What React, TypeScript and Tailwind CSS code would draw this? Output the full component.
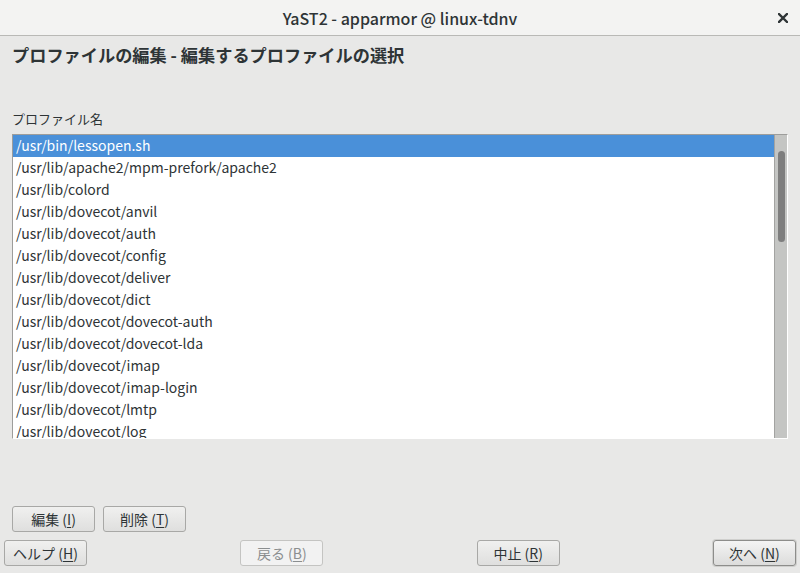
import React from 'react';

const profiles = [
    '/usr/bin/lessopen.sh',
    '/usr/lib/apache2/mpm-prefork/apache2',
    '/usr/lib/colord',
    '/usr/lib/dovecot/anvil',
    '/usr/lib/dovecot/auth',
    '/usr/lib/dovecot/config',
    '/usr/lib/dovecot/deliver',
    '/usr/lib/dovecot/dict',
    '/usr/lib/dovecot/dovecot-auth',
    '/usr/lib/dovecot/dovecot-lda',
    '/usr/lib/dovecot/imap',
    '/usr/lib/dovecot/imap-login',
    '/usr/lib/dovecot/lmtp',
    '/usr/lib/dovecot/log',
];

const JP = { fontFamily: '"Noto Sans CJK JP", "Noto Sans", sans-serif' };

interface BtnProps {
    label: string;
    mnemonic: string;
    disabled?: boolean;
    isDefault?: boolean;
}

const Btn = ({ label, mnemonic, disabled, isDefault }: BtnProps) => (
    <button
        type="button"
        disabled={disabled}
        className={`w-[83px] h-[26px] rounded-[3px] border text-[14px] leading-none flex items-center justify-center ${
            disabled
                ? 'border-[#c4c4c2] bg-[#f2f2f2] text-[#8b8e8f]'
                : isDefault
                    ? 'border-[#8d8d8b] bg-gradient-to-b from-[#f4f4f4] to-[#dcdcdb] text-[#2e3436] shadow-[0_0_0_1px_#cfcfcd]'
                    : 'border-[#a8a8a6] bg-gradient-to-b from-[#f0f0ef] to-[#dfdfde] text-[#2e3436]'
        }`}
        style={JP}
    >
        {label} (<span className="underline underline-offset-2">{mnemonic}</span>)
    </button>
);

export default function App() {
    return (
        <div className="w-[800px] h-[573px] bg-[#e8e8e7] flex flex-col overflow-hidden" style={JP}>
            <div className="h-[36px] shrink-0 bg-[#f3f3f2] border-b border-[#b9b9b6] flex items-center relative">
                <div className="flex-1 text-center text-[16px] text-[#2e3436] font-medium">
                    YaST2 - apparmor @ linux-tdnv
                </div>
                <svg className="absolute right-[12px] top-[13px]" width="10" height="10" viewBox="0 0 10 10">
                    <path d="M1 1 L9 9 M9 1 L1 9" stroke="#2e3436" strokeWidth="2.4" strokeLinecap="square" />
                </svg>
            </div>

            <div className="flex-1 flex flex-col px-[12px]">
                <h1 className="mt-[7px] text-[17.2px] leading-[24px] font-bold text-[#2e3436]">
                    プロファイルの編集 - 編集するプロファイルの選択
                </h1>
                <div className="mt-[43px] text-[13px] leading-[18px] text-[#2e3436]">プロファイル名</div>
                <div className="mt-[6px] h-[305px] flex border-l border-t border-[#9d9d9b] border-r border-b border-r-white border-b-white bg-white overflow-hidden">
                    <div className="flex-1 overflow-hidden">
                        {profiles.map((p, i) => (
                            <div
                                key={p}
                                className={`h-[22px] leading-[20px] pl-[3px] text-[14px] whitespace-nowrap ${
                                    i === 0 ? 'bg-[#4a90d9] text-white' : 'text-[#2e3436]'
                                }`}
                            >
                                {p}
                            </div>
                        ))}
                    </div>
                    <div className="w-[13px] shrink-0 bg-[#c4c5c3] border-l border-[#a3a3a1] pt-[16px] pl-[3px]">
                        <div className="w-[7px] h-[91px] rounded-full bg-[#7e7e7e]" />
                    </div>
                </div>

                <div className="mt-[67px] flex gap-[8px]">
                    <Btn label="編集" mnemonic="I" />
                    <Btn label="削除" mnemonic="T" />
                </div>
            </div>

            <div className="flex justify-between px-[4px] mt-[8px] mb-[8px]">
                <Btn label="ヘルプ" mnemonic="H" />
                <Btn label="戻る" mnemonic="B" disabled />
                <Btn label="中止" mnemonic="R" />
                <Btn label="次へ" mnemonic="N" isDefault />
            </div>
        </div>
    );
}
